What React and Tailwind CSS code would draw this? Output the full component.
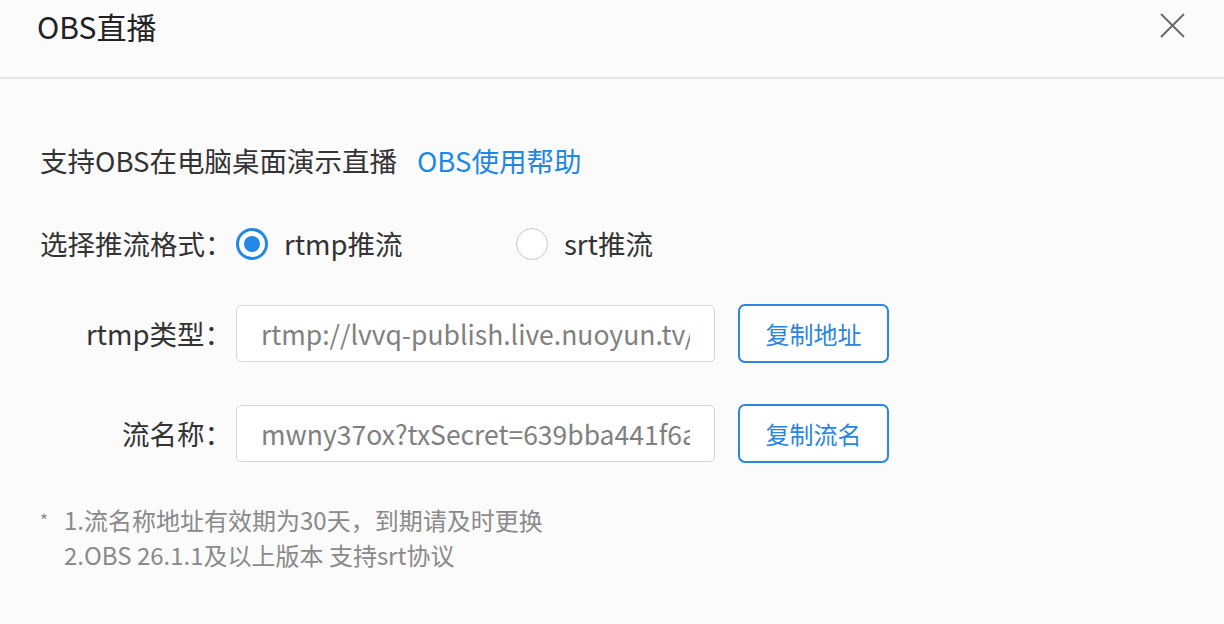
import React from 'react';

const Radio = ({ checked, label }) => (
  <label className="flex items-center gap-[16px]">
    <span
      className={
        checked
          ? 'w-[32px] h-[32px] rounded-full border-[3px] border-[#2287e6] flex items-center justify-center bg-white'
          : 'w-[32px] h-[32px] rounded-full border border-[#c8c8c8] bg-white'
      }
    >
      {checked && <span className="w-[16px] h-[16px] rounded-full bg-[#2287e6]" />}
    </span>
    <span className="text-[27.5px] text-[#333]">{label}</span>
  </label>
);

const Field = ({ label, value, action }) => (
  <div className="flex items-center h-[59px]">
    <div className="w-[196px] pr-[4px] text-right text-[27.5px] text-[#333] whitespace-nowrap">{label}</div>
    <input
      readOnly
      value={value}
      className="w-[479px] h-[57px] border border-[#d6d6d6] rounded-[5px] bg-white px-[24px] text-[26.5px] text-[#808080] outline-none"
    />
    <button className="ml-[23px] shrink-0 w-[151px] h-[59px] border-2 border-[#2a86de] rounded-[7px] bg-white text-[24px] text-[#2a86de]">
      {action}
    </button>
  </div>
);

export default function App() {
  return (
    <div
      className="w-[1224px] h-[624px] bg-[#fbfbfc] overflow-hidden"
      style={{ fontFamily: '"Noto Sans CJK SC", "Noto Sans", sans-serif' }}
    >
      <div className="h-[79px] flex items-start justify-between pl-[37px] pr-[39px] pt-[5px] border-b-2 border-[#e6e6e6]">
        <h1 className="text-[30px] text-[#222] leading-[42px]">OBS直播</h1>
        <button className="mt-[8px] text-[#666]">
          <svg width="25" height="25" viewBox="0 0 25 25" fill="none" stroke="currentColor" strokeWidth="1.8">
            <path d="M1 1 L24 24 M24 1 L1 24" />
          </svg>
        </button>
      </div>

      <div className="pl-[40px]">
        <p className="mt-[64px] text-[27.5px] leading-[34px] text-[#333]">
          支持OBS在电脑桌面演示直播
          <a href="#" className="ml-[20px] text-[#1e88e5]">OBS使用帮助</a>
        </p>

        <div className="mt-[50px] flex items-center h-[34px]">
          <span className="w-[196px] text-[27.5px] text-[#333] whitespace-nowrap">选择推流格式：</span>
          <div className="w-[280px]">
            <Radio checked label="rtmp推流" />
          </div>
          <Radio label="srt推流" />
        </div>

        <div className="mt-[43px] flex flex-col gap-[41px]">
          <Field label="rtmp类型：" value="rtmp://lvvq-publish.live.nuoyun.tv/live/mwny37ox" action="复制地址" />
          <Field label="流名称：" value="mwny37ox?txSecret=639bba441f6a2c8d" action="复制流名" />
        </div>

        <div className="mt-[39px] flex text-[24px] leading-[35px] text-[#8a8a8a]">
          <span className="w-[24px] text-[17px]">*</span>
          <div>
            <p>1.流名称地址有效期为30天，到期请及时更换</p>
            <p>2.OBS 26.1.1及以上版本 支持srt协议</p>
          </div>
        </div>
      </div>
    </div>
  );
}
